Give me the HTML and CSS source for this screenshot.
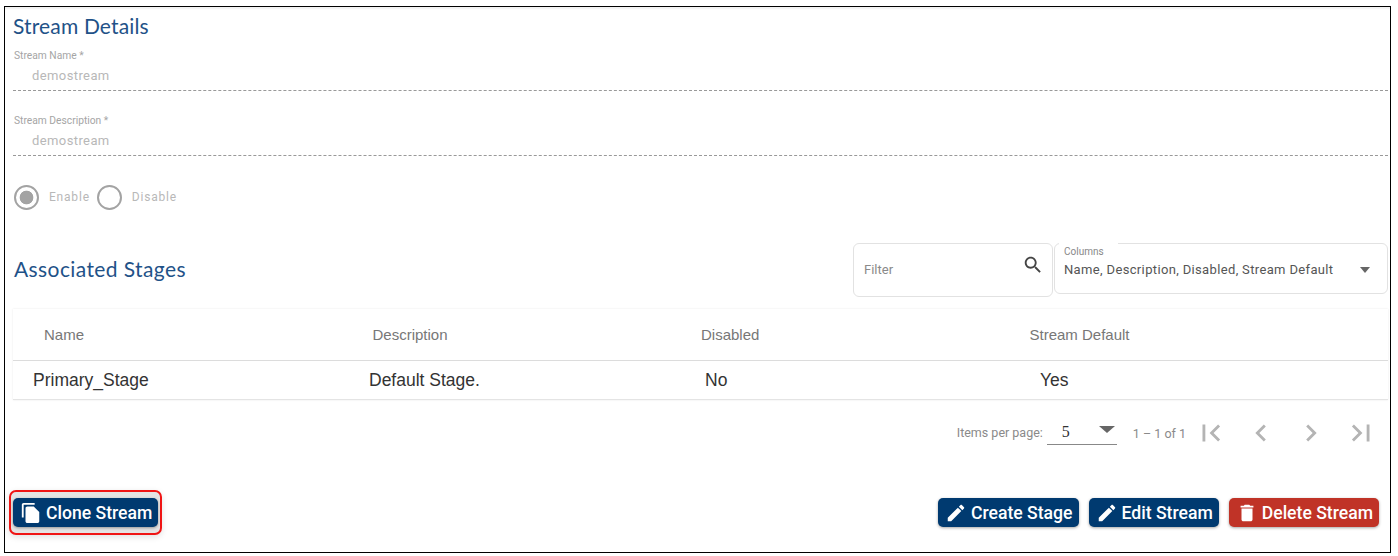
FILE: index.html
```html
<!DOCTYPE html>
<html lang="en">
<head>
	<meta charset="UTF-8">
	<meta name="viewport" content="width=device-width, initial-scale=1.0">
	<title>Stream Details</title>
<link rel="stylesheet" href="styles.css"></head>

<body>
	<main class="frame">
		<h2 class="section-title">Stream Details</h2>

		<div class="field">
			<label class="field-label">Stream Name *</label>
			<div class="field-value">demostream</div>
		</div>
		<div class="field">
			<label class="field-label">Stream Description *</label>
			<div class="field-value">demostream</div>
		</div>

		<div class="radios">
			<span class="radio radio-on"></span>
			<span class="radio-text">Enable</span>
			<span class="radio"></span>
			<span class="radio-text">Disable</span>
		</div>

		<div class="stages-head">
			<h2 class="section-title">Associated Stages</h2>
			<div class="stages-tools">
				<div class="filter-box">
					<span>Filter</span>
					<svg class="search-icon" viewBox="0 0 24 24"><path d="M15.5 14h-.79l-.28-.27C15.41 12.59 16 11.11 16 9.5 16 5.91 13.09 3 9.5 3S3 5.91 3 9.5 5.91 16 9.5 16c1.61 0 3.09-.59 4.23-1.57l.27.28v.79l5 4.99L20.49 19l-4.99-5zm-6 0C7.01 14 5 11.99 5 9.5S7.01 5 9.5 5 14 7.01 14 9.5 11.99 14 9.5 14z"/></svg>
				</div>
				<div class="columns-box">
					<span class="columns-label">Columns</span>
					<span>Name, Description, Disabled, Stream Default</span>
					<span class="caret"></span>
				</div>
			</div>
		</div>

		<div class="table">
			<div class="table-head">
				<span>Name</span>
				<span>Description</span>
				<span>Disabled</span>
				<span>Stream Default</span>
			</div>
			<div class="table-row">
				<span>Primary_Stage</span>
				<span>Default Stage.</span>
				<span>No</span>
				<span>Yes</span>
			</div>
		</div>

		<div class="paginator">
			<span class="per-page">Items per page:</span>
			<div class="per-page-select">
				<span>5</span>
				<span class="caret"></span>
			</div>
			<span class="range">1 – 1 of 1</span>
			<svg class="page-icon" viewBox="0 0 24 24"><path d="M18.41 16.59L13.82 12l4.59-4.59L17 6l-6 6 6 6zM6 6h2v12H6z"/></svg>
			<svg class="page-icon" viewBox="0 0 24 24"><path d="M15.41 7.41L14 6l-6 6 6 6 1.41-1.41L10.83 12z"/></svg>
			<svg class="page-icon" viewBox="0 0 24 24"><path d="M10 6L8.59 7.41 13.17 12l-4.58 4.59L10 18l6-6z"/></svg>
			<svg class="page-icon" viewBox="0 0 24 24"><path d="M5.59 7.41L10.18 12l-4.59 4.59L7 18l6-6-6-6zM16 6h2v12h-2z"/></svg>
		</div>

		<div class="actions">
			<div class="highlight">
				<button class="btn">
					<svg viewBox="0 0 24 24"><path d="M16 1H4c-1.1 0-2 .9-2 2v14h2V3h12V1zm-1 4l6 6v10c0 1.1-.9 2-2 2H7.99C6.89 23 6 22.1 6 21l.01-14c0-1.1.89-2 1.99-2h7z"/></svg>
					Clone Stream
				</button>
			</div>
			<div class="actions-right">
				<button class="btn">
					<svg viewBox="0 0 24 24"><path d="M3 17.25V21h3.75L17.81 9.94l-3.75-3.75L3 17.25zM20.71 7.04c.39-.39.39-1.02 0-1.41l-2.34-2.34c-.39-.39-1.02-.39-1.41 0l-1.83 1.83 3.75 3.75 1.83-1.83z"/></svg>
					Create Stage
				</button>
				<button class="btn">
					<svg viewBox="0 0 24 24"><path d="M3 17.25V21h3.75L17.81 9.94l-3.75-3.75L3 17.25zM20.71 7.04c.39-.39.39-1.02 0-1.41l-2.34-2.34c-.39-.39-1.02-.39-1.41 0l-1.83 1.83 3.75 3.75 1.83-1.83z"/></svg>
					Edit Stream
				</button>
				<button class="btn btn-danger">
					<svg viewBox="0 0 24 24"><path d="M6 19c0 1.1.9 2 2 2h8c1.1 0 2-.9 2-2V7H6v12zM19 4h-3.5l-1-1h-5l-1 1H5v2h14V4z"/></svg>
					Delete Stream
				</button>
			</div>
		</div>
	</main>
</body>
</html>
```

FILE: styles.css
```css
* {
  box-sizing: border-box;
}

body {
  font-family: Roboto, "Liberation Sans", sans-serif;
  margin: 0;
  background-color: #ffffff;
  color: #333;
}

.frame {
  width: 1387px;
  height: 547px;
  margin: 6px 0 0 4px;
  padding: 0 2px 0 8px;
  border: 1px solid #000;
  box-shadow: inset 0 3px 2px -1px #f1f1f1;
}

.section-title {
  margin: 0;
  font-family: Lato, sans-serif;
  font-size: 21px;
  font-weight: 400;
  line-height: 24px;
  letter-spacing: 0.15px;
  color: #1f5288;
}

.frame > .section-title {
  padding-top: 7px;
}

.field {
  height: 65px;
  border-bottom: 1px dashed #999;
  padding-top: 24px;
}

.field:first-of-type {
  height: 53px;
  padding-top: 12px;
}

.field-label {
  display: block;
  margin-left: 1px;
  font-size: 10.25px;
  line-height: 12px;
  color: #a5a5a5;
}

.field-value {
  margin: 5px 0 0 19px;
  font-size: 13px;
  line-height: 18px;
  letter-spacing: 0.4px;
  color: #b8b8b8;
}

.radios {
  display: flex;
  align-items: center;
  height: 26px;
  margin: 28px 0 0 1px;
}

.radio {
  width: 25px;
  height: 25px;
  border: 2px solid #a3a3a3;
  border-radius: 50%;
}

.radio-on {
  background: radial-gradient(circle, #a3a3a3 0, #a3a3a3 6.5px, #fff 7.2px);
}

.radio-text {
  margin: 0 7px 0 10px;
  font-size: 12px;
  letter-spacing: 0.8px;
  color: #b8b8b8;
}

.stages-head {
  display: flex;
  justify-content: space-between;
  align-items: center;
  margin-top: 33px;
  padding-left: 1px;
  height: 54px;
}

.stages-head .section-title {
  padding-bottom: 2px;
  letter-spacing: 0.4px;
}

.stages-tools {
  display: flex;
  gap: 1px;
  align-items: flex-start;
}

.filter-box {
  display: flex;
  justify-content: space-between;
  align-items: flex-start;
  width: 200px;
  height: 54px;
  padding: 14px 8px 0 10px;
  border: 1px solid #e2e2e2;
  border-radius: 6px;
  font-size: 13px;
  line-height: 24px;
  color: #8a8a8a;
}

.search-icon {
  width: 22px;
  height: 22px;
  margin-top: -4px;
  fill: #444;
}

.columns-box {
  position: relative;
  display: flex;
  align-items: center;
  justify-content: space-between;
  width: 334px;
  height: 51px;
  padding: 2px 17px 0 9px;
  border: 1px solid #e2e2e2;
  border-radius: 6px;
  font-size: 13px;
  letter-spacing: 0.35px;
  color: #555;
}

.columns-label {
  position: absolute;
  left: 4px;
  top: -2px;
  padding: 3px 14px 0 5px;
  background: #fff;
  font-size: 10px;
  line-height: 14px;
  letter-spacing: 0;
  color: #888;
}

.caret {
  width: 0;
  height: 0;
  border-left: 5.5px solid transparent;
  border-right: 5.5px solid transparent;
  border-top: 6px solid #666;
}

.table {
  margin-top: 12px;
  box-shadow: 0 0 2px #e8e8e8;
}

.table-head,
.table-row {
  display: grid;
  align-items: center;
}

.table-head {
  grid-template-columns: 328.5px 328.5px 328.5px 1fr;
  height: 52px;
  padding: 0 0 0 31px;
  border-bottom: 1px solid #dcdcdc;
  font-family: "Liberation Sans", sans-serif;
  font-size: 15px;
  color: #777;
}

.table-row {
  grid-template-columns: 336px 336px 335px 1fr;
  height: 39px;
  padding: 0 0 0 20px;
  border-bottom: 1px solid #e4e4e4;
  font-family: "Liberation Sans", sans-serif;
  font-size: 17.5px;
  color: #333;
}

.paginator {
  display: flex;
  align-items: center;
  justify-content: flex-end;
  height: 32px;
  margin-top: 17px;
  padding-right: 10px;
  font-size: 12.5px;
  color: #8a8a8a;
}

.per-page {
  margin-top: -2px;
}

.per-page-select {
  display: flex;
  align-items: flex-start;
  justify-content: space-between;
  width: 70px;
  height: 24px;
  margin: 0 16px 0 4px;
  padding: 2px 4px 0 15px;
  border-bottom: 1px solid #888;
  font-family: "Liberation Serif", serif;
  font-size: 16px;
  color: #333;
}

.per-page-select .caret {
  margin-top: 3px;
  border-left-width: 8px;
  border-right-width: 8px;
  border-top-width: 7px;
  margin-right: -2px;
}

.range {
  margin-right: 8px;
}

.page-icon {
  width: 34px;
  height: 34px;
  margin-left: 16px;
  fill: #b4b4b4;
}

.page-icon:first-of-type {
  margin-left: 0;
}

.actions {
  display: flex;
  justify-content: space-between;
  align-items: center;
  margin-top: 41px;
  padding-right: 9px;
}

.actions-right {
  display: flex;
  gap: 10px;
}

.highlight {
  margin-left: -4px;
  padding: 6px 2px;
  border: 2px solid #f01515;
  border-radius: 7px;
  background: #e4e4e4;
  box-shadow: 0 2px 6px rgba(0, 0, 0, 0.12);
}

.btn {
  display: flex;
  align-items: center;
  gap: 4px;
  height: 29px;
  padding: 0 6px 0 7px;
  border: 0;
  border-radius: 5px;
  background: #003a70;
  box-shadow: 0 1px 3px rgba(0, 0, 0, 0.35);
  font-family: Roboto, sans-serif;
  font-size: 17.6px;
  font-weight: 500;
  color: #fff;
}

.btn svg {
  width: 22px;
  height: 22px;
  fill: #fff;
}

.btn-danger {
  background: #c03327;
}
```
